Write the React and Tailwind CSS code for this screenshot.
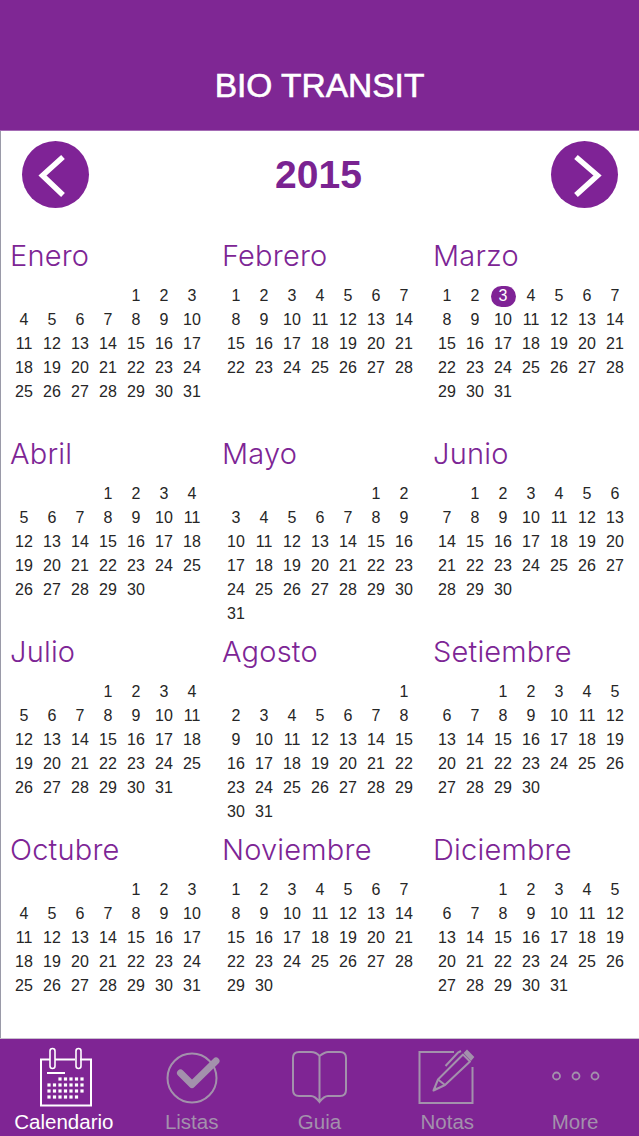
const months = [
  { name: 'Enero', offset: 4, days: 31 },
  { name: 'Febrero', offset: 0, days: 28 },
  { name: 'Marzo', offset: 0, days: 31, today: 3 },
  { name: 'Abril', offset: 3, days: 30 },
  { name: 'Mayo', offset: 5, days: 31 },
  { name: 'Junio', offset: 1, days: 30 },
  { name: 'Julio', offset: 3, days: 31 },
  { name: 'Agosto', offset: 6, days: 31 },
  { name: 'Setiembre', offset: 2, days: 30 },
  { name: 'Octubre', offset: 4, days: 31 },
  { name: 'Noviembre', offset: 0, days: 30 },
  { name: 'Diciembre', offset: 2, days: 31 },
]

function Month({ name, offset, days, today }) {
  const cells = []
  for (let i = 0; i < offset; i++) cells.push(<div key={'e' + i} />)
  for (let d = 1; d <= days; d++) {
    cells.push(
      <div key={d} className="h-[24px] flex items-center justify-center">
        {d === today ? (
          <span className="w-[25px] h-[21px] rounded-full bg-[#7f2396] text-white flex items-center justify-center">{d}</span>
        ) : d}
      </div>
    )
  }
  return (
    <div className="h-[198px]">
      <div className="h-[54px] leading-[54px] text-[29px] font-light text-[#7d2595] font-['Inter',sans-serif] tracking-[0.2px]">{name}</div>
      <div className="grid grid-cols-[repeat(7,28px)] pt-px text-[16px] text-[#262626]">{cells}</div>
    </div>
  )
}

function CalendarIcon() {
  const rows = [35, 41, 47, 53]
  const cols = [17, 22.5, 28, 33.5, 39, 44.5, 50]
  return (
    <svg width="64" height="64" viewBox="0 0 64 64" fill="none">
      <path d="M18 15.5H9V61.5H59V15.5H48M23 15.5H43" stroke="#fff" strokeWidth="2" />
      <rect x="18" y="4.5" width="5" height="20" rx="2.5" stroke="#fff" strokeWidth="1.6" />
      <rect x="44" y="4.5" width="5" height="20" rx="2.5" stroke="#fff" strokeWidth="1.6" />
      <rect x="15" y="28" width="18" height="2" fill="#fff" />
      {rows.map((y, r) =>
        cols.map((x, c) => {
          if (r === 0 && c < 2) return null
          if (r === 3 && c > 5) return null
          return <rect key={r + '-' + c} x={x - 1.6} y={y - 1.6} width="3.2" height="3.2" fill="#fff" />
        })
      )}
    </svg>
  )
}

function CheckIcon() {
  return (
    <svg width="64" height="64" viewBox="0 0 64 64" fill="none">
      <circle cx="32" cy="34" r="24.5" stroke="#a391ac" strokeWidth="2" />
      <path d="M20.5 29L32 40.5L56 17" stroke="#a391ac" strokeWidth="7" strokeLinecap="round" strokeLinejoin="round" />
    </svg>
  )
}

function BookIcon() {
  return (
    <svg width="64" height="64" viewBox="0 0 64 64" fill="none" stroke="#a391ac" strokeWidth="2">
      <path d="M32.5 12C30 9 27 8 24 8H12Q6 8 6 14V46Q6 52 12 52H24Q28 52 32.5 58Q37 52 41 52H53Q59 52 59 46V14Q59 8 53 8H41Q38 8 32.5 12V58" />
    </svg>
  )
}

function NoteIcon() {
  return (
    <svg width="64" height="64" viewBox="0 0 64 64" fill="none" stroke="#a391ac" strokeWidth="2">
      <path d="M39 8H4.5V59H57.5V23" />
      <path d="M18.5 46.5L23 35.5L48 10.5L55 17.5L30 41Z" strokeLinejoin="round" />
      <path d="M23 35.5L30 41" />
      <path d="M21 46L20 43" />
      <path d="M50 9L52 7L58 13L56 15.5Z" fill="#a391ac" />
      <path d="M30.5 22L43 8.5L46 7" />
    </svg>
  )
}

function DotsIcon() {
  return (
    <svg width="64" height="64" viewBox="0 0 64 64" fill="none" stroke="#a391ac" strokeWidth="1.8">
      <circle cx="13.5" cy="32" r="3.5" />
      <circle cx="33" cy="32" r="3.5" />
      <circle cx="52" cy="32" r="3.5" />
    </svg>
  )
}

const tabs = [
  { label: 'Calendario', icon: <CalendarIcon />, active: true },
  { label: 'Listas', icon: <CheckIcon /> },
  { label: 'Guia', icon: <BookIcon /> },
  { label: 'Notas', icon: <NoteIcon /> },
  { label: 'More', icon: <DotsIcon /> },
]

export default function App() {
  return (
    <div className="w-[639px] h-[1136px] overflow-hidden flex flex-col bg-white font-['Liberation_Sans',sans-serif]">
      <header className="h-[131px] shrink-0 pt-[43px] bg-[#7f2794] border-b border-[#a56cb5] text-center text-white text-[33.5px] leading-[86px] [-webkit-text-stroke:0.6px_#fff]">
        BIO TRANSIT
      </header>

      <main className="flex-1 border-l border-[#9a9aa8]">
        <div className="h-[98px] pt-[10px] pl-[21px] pr-[21px] flex items-start justify-between">
          <button className="w-[67px] h-[67px] rounded-full bg-[#7f2396] flex items-center justify-center">
            <svg width="67" height="67" viewBox="0 0 67 67" fill="none">
              <path d="M41 16L20.5 34.5L41 54" stroke="#fff" strokeWidth="5.5" />
            </svg>
          </button>
          <div className="h-[67px] pr-[3px] leading-[67px] text-[39px] font-bold text-[#7a2391]">2015</div>
          <button className="w-[67px] h-[67px] rounded-full bg-[#7f2396] flex items-center justify-center">
            <svg width="67" height="67" viewBox="0 0 67 67" fill="none">
              <path d="M25 16L46.5 34.5L25 54" stroke="#fff" strokeWidth="5.5" />
            </svg>
          </button>
        </div>
        <div className="grid grid-cols-[212px_211px_212px] pl-[9px]">
          {months.map(m => <Month key={m.name} {...m} />)}
        </div>
      </main>

      <nav className="h-[98px] shrink-0 border-t border-[#c9bfce] bg-[#7f2594] grid grid-cols-5 pt-[5px]">
        {tabs.map(t => (
          <div key={t.label} className="flex flex-col items-center">
            {t.icon}
            <div className={`h-[28px] leading-[28px] text-[20.5px] ${t.active ? 'text-white' : 'text-[#a391ac]'}`}>{t.label}</div>
          </div>
        ))}
      </nav>
    </div>
  )
}
